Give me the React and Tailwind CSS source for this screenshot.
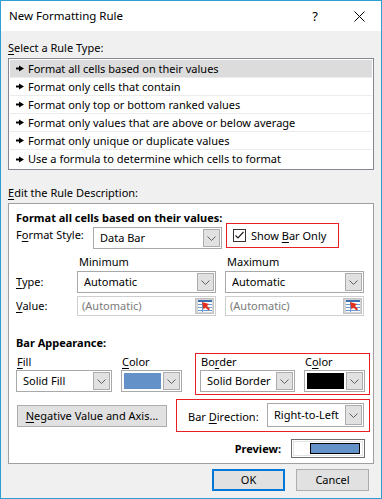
const Chevron = () => (
  <svg width="9" height="5" viewBox="0 0 9 5">
    <polyline points="0.5,0.5 4.5,4.5 8.5,0.5" fill="none" stroke="#606060" strokeWidth="1" />
  </svg>
);

const ArrowBtn = () => (
  <div className="flex items-center justify-center w-[17px] h-full border border-[#adadad] bg-[#e1e1e1] shrink-0">
    <Chevron />
  </div>
);

function Dropdown({ value, className }) {
  return (
    <div className={"flex items-stretch border border-[#a9a9a9] bg-white p-[1px] shrink-0 " + className}>
      <div className="flex-1 flex items-center pl-[5px] leading-[16px] whitespace-nowrap">{value}</div>
      <ArrowBtn />
    </div>
  );
}

function ColorPick({ color }) {
  return (
    <div className="flex items-stretch border border-[#a9a9a9] bg-white p-[1px] w-[61px] h-[22px] shrink-0">
      <div className="flex-1 mr-[1px] border border-white" style={{ background: color }} />
      <ArrowBtn />
    </div>
  );
}

const RefIcon = () => (
  <svg width="16" height="14" viewBox="0 0 16 14">
    <rect x="1" y="1" width="14" height="12" fill="#fff" />
    <rect x="1" y="1" width="14" height="2" fill="#3a6fb0" />
    <line x1="1" y1="5.5" x2="15" y2="5.5" stroke="#6d9bd1" />
    <line x1="1" y1="8.5" x2="15" y2="8.5" stroke="#6d9bd1" />
    <line x1="1" y1="11.5" x2="15" y2="11.5" stroke="#6d9bd1" />
    <line x1="5.5" y1="3" x2="5.5" y2="13" stroke="#6d9bd1" />
    <polygon points="5,3 12,5 10,7 13,10 11.5,11.5 8.5,8.5 6.5,10.5" fill="#e0301e" />
  </svg>
);

function ValueBox() {
  return (
    <div className="flex items-stretch border border-[#cfcfcf] bg-white p-[1px] w-[139px] h-[20px] shrink-0">
      <div className="flex-1 flex items-center pl-[3px] text-[#7a7a7a] leading-[16px]">(Automatic)</div>
      <div className="w-[19px] flex items-center justify-center bg-[#d4d4d4] border border-[#c2c2c2]">
        <RefIcon />
      </div>
    </div>
  );
}

const Pointer = () => (
  <svg width="8" height="7" viewBox="0 0 8 7" className="shrink-0">
    <rect x="0" y="2.5" width="4" height="2" fill="#000" />
    <polygon points="3,0.5 8,3.5 3,6.5" fill="#000" />
  </svg>
);

const U = ({ children }) => <span className="underline underline-offset-[2px]">{children}</span>;

const rules = [
  "Format all cells based on their values",
  "Format only cells that contain",
  "Format only top or bottom ranked values",
  "Format only values that are above or below average",
  "Format only unique or duplicate values",
  "Use a formula to determine which cells to format",
];

export default function App() {
  return (
    <div className="w-[382px] h-[499px] border border-[#2d9fd3] flex flex-col bg-[#f0f0f0] text-[11px] text-black font-['Noto_Sans','Open_Sans',sans-serif] overflow-hidden">
      <div className="h-[30px] bg-white flex items-center pl-[8px] shrink-0">
        <span className="leading-[16px] text-[11.5px]">New Formatting Rule</span>
        <span className="ml-auto text-[13px] leading-[16px]">?</span>
        <svg width="11" height="11" viewBox="0 0 11 11" className="ml-[36px] mr-[16px]">
          <line x1="0.5" y1="0.5" x2="10.5" y2="10.5" stroke="#000" />
          <line x1="10.5" y1="0.5" x2="0.5" y2="10.5" stroke="#000" />
        </svg>
      </div>

      <div className="flex-1 px-[7px] pt-[9px]">
        <div className="leading-[16px]"><U>S</U>elect a Rule Type:</div>
        <div className="mt-[2px] h-[112px] border border-[#828790] bg-white p-[1px]">
          {rules.map((r, i) => (
            <div
              key={r}
              className={
                "h-[18px] flex items-center pl-[6px] " +
                (i === 0 ? "bg-[#dcdcdc] " : "") +
                (i < rules.length - 1 ? "border-b border-[#ececec]" : "")
              }
            >
              <Pointer />
              <span className="ml-[4px] leading-[16px] whitespace-nowrap">{r}</span>
            </div>
          ))}
        </div>

        <div className="mt-[15px] leading-[16px]"><U>E</U>dit the Rule Description:</div>
        <div className="mt-[2px] h-[261px] border border-[#a0a0a0] bg-white pl-[7px] pr-[8px] pt-[7px]">
          <div className="font-bold leading-[14px] whitespace-nowrap">Format all cells based on their values:</div>

          <div className="mt-[-2px] flex items-start h-[25px]">
            <div className="w-[77px] mt-[4px] leading-[16px] shrink-0">F<U>o</U>rmat Style:</div>
            <Dropdown value="Data Bar" className="w-[129px] h-[22px] mt-[4px]" />
            <div className="ml-[4px] w-[113px] h-[25px] border border-[#e81e25] flex items-center pl-[6px] shrink-0">
              <svg width="13" height="13" viewBox="0 0 13 13" className="shrink-0">
                <rect x="0.5" y="0.5" width="12" height="12" fill="#fff" stroke="#333" />
                <polyline points="2.5,6.5 5,9 10.5,3" fill="none" stroke="#222" strokeWidth="1.2" />
              </svg>
              <span className="ml-[5px] leading-[16px] whitespace-nowrap">Show <U>B</U>ar Only</span>
            </div>
          </div>

          <div className="mt-[6px] flex leading-[16px]">
            <div className="w-[62px] shrink-0" />
            <div className="w-[139px] pl-[1px] shrink-0">Minimum</div>
            <div className="ml-[9px] pl-[1px]">Maximum</div>
          </div>

          <div className="mt-[1px] flex items-start h-[22px]">
            <div className="w-[61px] mt-[3px] leading-[16px] shrink-0"><U>T</U>ype:</div>
            <Dropdown value="Automatic" className="w-[139px] h-[22px]" />
            <Dropdown value="Automatic" className="w-[139px] h-[22px] ml-[9px]" />
          </div>

          <div className="mt-[3px] flex items-start h-[20px]">
            <div className="w-[61px] mt-[2px] leading-[16px] shrink-0"><U>V</U>alue:</div>
            <ValueBox />
            <div className="ml-[9px]"><ValueBox /></div>
          </div>

          <div className="mt-[19px] font-bold leading-[16px]">Bar Appearance:</div>

          <div className="mt-[2px] flex items-start">
            <div className="pt-[1px] flex flex-col shrink-0">
              <div className="flex leading-[16px]">
                <div className="w-[105px] pl-[1px]"><U>F</U>ill</div>
                <div className="pl-[1px]"><U>C</U>olor</div>
              </div>
              <div className="flex">
                <Dropdown value="Solid Fill" className="w-[96px] h-[22px]" />
                <div className="ml-[9px]"><ColorPick color="#6591c9" /></div>
              </div>
            </div>
            <div className="ml-[13px] w-[175px] h-[42px] border border-[#e81e25] pl-[4px] shrink-0 flex flex-col">
              <div className="flex leading-[16px]">
                <div className="w-[104px] pl-[1px]">Bo<U>r</U>der</div>
                <div className="pl-[1px]">C<U>o</U>lor</div>
              </div>
              <div className="flex">
                <Dropdown value="Solid Border" className="w-[95px] h-[22px]" />
                <div className="ml-[9px]"><ColorPick color="#000000" /></div>
              </div>
            </div>
          </div>

          <div className="mt-[4px] flex items-start">
            <div className="ml-[1px] mt-[6px] w-[150px] h-[22px] border border-[#adadad] bg-[#e1e1e1] flex items-center justify-center leading-[16px] whitespace-nowrap shrink-0">
              <span><U>N</U>egative Value and Axis...</span>
            </div>
            <div className="ml-[9px] w-[194px] h-[33px] border border-[#e81e25] pl-[11px] pt-[3px] flex items-start shrink-0">
              <div className="w-[79px] mt-[6px] leading-[16px] whitespace-nowrap shrink-0">Bar <U>D</U>irection:</div>
              <Dropdown value="Right-to-Left" className="w-[97px] h-[24px]" />
            </div>
          </div>

          <div className="mt-[7px] flex justify-end items-center">
            <span className="font-bold leading-[16px] mr-[10px]">Preview:</span>
            <div className="w-[74px] h-[19px] border border-[#6e6e6e] p-[1px] shrink-0">
              <div className="h-full border border-[#e3e3e3] bg-white flex items-center justify-end pr-[2px]">
                <div className="w-[50px] h-[11px] border border-black bg-[#6591c9]" />
              </div>
            </div>
          </div>
        </div>

        <div className="mt-[5px] flex justify-end pr-[5px]">
          <div className="w-[73px] h-[22px] border-2 border-[#0078d7] bg-[#e1e1e1] flex items-center justify-center leading-[16px]">OK</div>
          <div className="ml-[11px] w-[73px] h-[22px] border border-[#adadad] bg-[#e1e1e1] flex items-center justify-center leading-[16px]">Cancel</div>
        </div>
      </div>
    </div>
  );
}
